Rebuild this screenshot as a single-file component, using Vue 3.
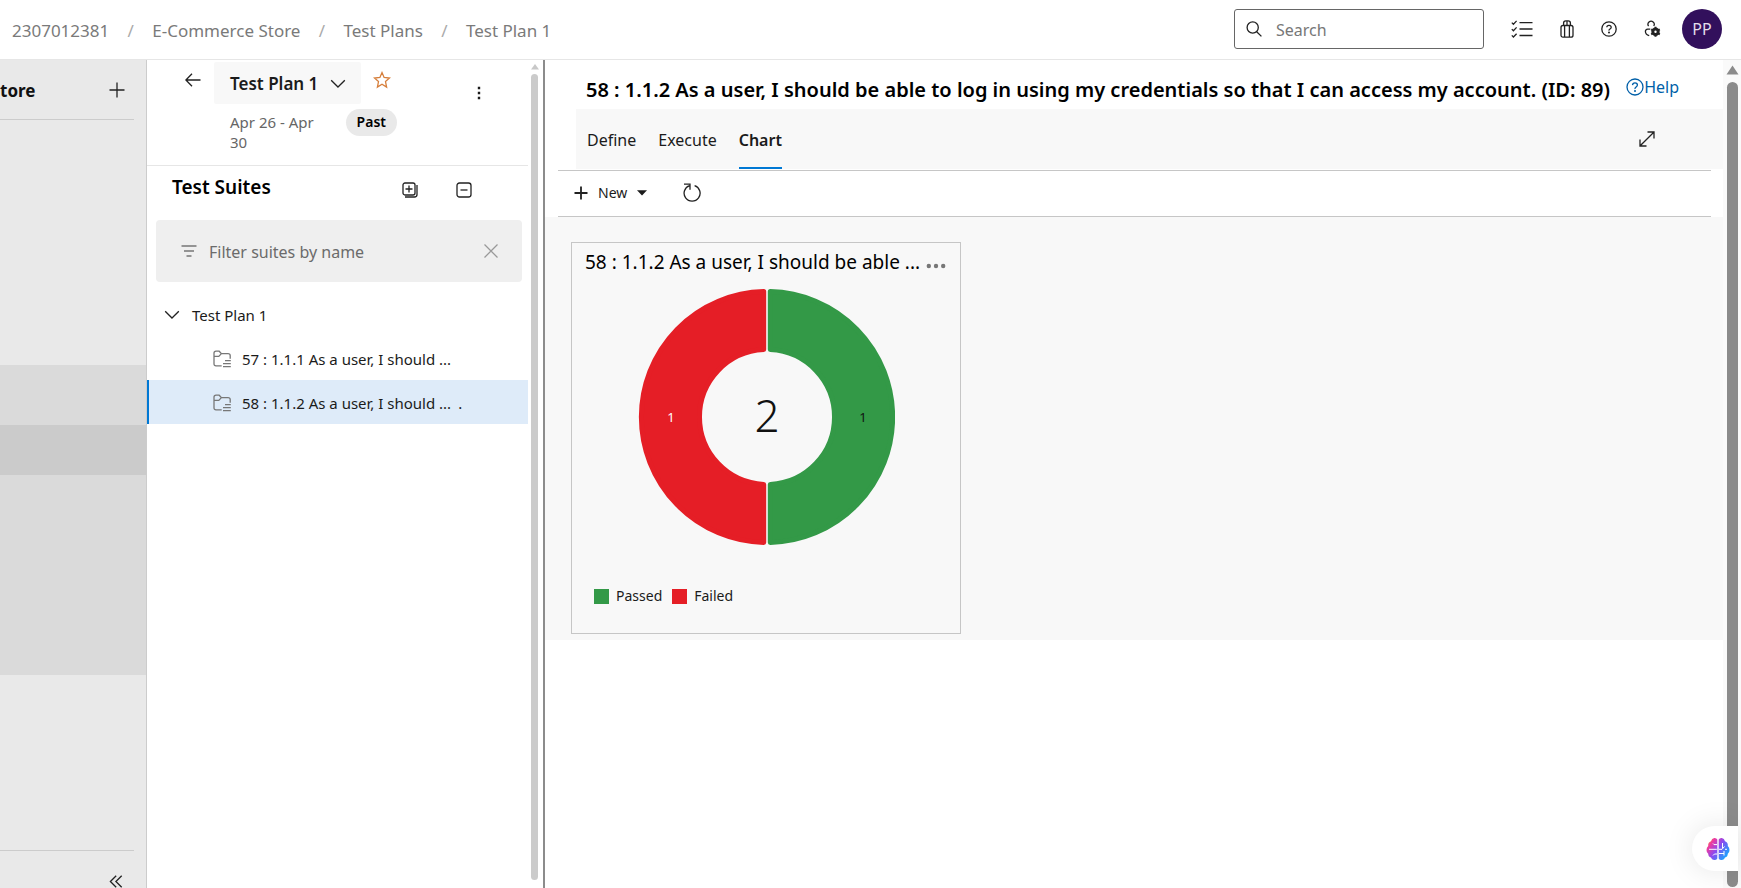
<script setup>
import { ref } from 'vue'

const crumbs = ['2307012381', 'E-Commerce Store', 'Test Plans', 'Test Plan 1']
const suites = [
  { label: '57 : 1.1.1 As a user, I should ...', more: '' },
  { label: '58 : 1.1.2 As a user, I should ...', more: '.' }
]
const selected = ref(1)
const tabs = ['Define', 'Execute', 'Chart']
const activeTab = ref('Chart')
const legend = [
  { name: 'Passed', tone: 'passed' },
  { name: 'Failed', tone: 'failed' }
]
</script>

<template>
  <div class="page">
    <header class="topbar">
      <nav class="crumbs" aria-label="Breadcrumb">
        <template v-for="(c, i) in crumbs" :key="c">
          <span v-if="i" class="sep">/</span>
          <a href="#">{{ c }}</a>
        </template>
      </nav>
      <label class="search">
        <svg width="16" height="16" viewBox="0 0 16 16"><circle cx="6.7" cy="6.5" r="5.6" /><path d="M10.7 10.7 15.4 15.4" /></svg>
        <input type="search" placeholder="Search" aria-label="Search" />
      </label>
      <div class="tools">
        <button aria-label="Work items">
          <svg width="22" height="18" viewBox="0 0 22 18"><path d="M.8 2.6 2.4 4.2 5.6.9M.8 9.1l1.6 1.6 3.2-3.3M.8 15.4 2.4 17l3.2-3.3M8.5 2.6H21.5M8.5 9H21.5M8.5 15.5H21.5" /></svg>
        </button>
        <button aria-label="Marketplace">
          <svg width="14" height="18" viewBox="0 0 14 18"><rect x="1" y="5.5" width="12" height="11.7" rx="2" /><path d="M3.6 5.5V3Q3.6.8 5.8.8H8.2Q10.4.8 10.4 3V5.5M7 1V5.5M4.6 5.5v11.5M9.4 5.5v11.5" /></svg>
        </button>
        <button aria-label="Help">
          <svg width="16" height="16" viewBox="0 0 16 16"><circle cx="8" cy="8" r="7.2" /><path d="M5.8 6.3Q5.9 4.3 8 4.3T10.2 6.2Q10.2 7.2 9 8T8 9.7" /><circle class="dot" cx="8" cy="11.6" r="1" /></svg>
        </button>
        <button aria-label="User settings">
          <svg width="18" height="18" viewBox="0 0 18 18"><path d="M4.6 6.1A3.1 3.1 0 1 1 9.7 6M5.2 15.6Q1.5 14.5 1.4 11.5 1.4 9.3 3.7 9.1H6.3" /><circle class="gear" cx="11.5" cy="11.8" r="2.7" /><path class="teeth" d="M11.5 6.8V8.6M11.5 15V16.8M7.2 9.3 8.8 10.2M14.2 13.4 15.8 14.3M7.2 14.3 8.8 13.4M14.2 10.2 15.8 9.3" /></svg>
        </button>
      </div>
      <button class="avatar" aria-label="Account">PP</button>
    </header>

    <div class="body">
      <aside class="rail">
        <div class="rail-head">
          <strong>tore</strong>
          <button aria-label="Add"><svg width="16" height="16" viewBox="0 0 16 16"><path d="M8 .5V15.5M.5 8H15.5" /></svg></button>
        </div>
        <div class="rail-nav"><div class="group"><div class="current"></div></div></div>
        <div class="rail-foot">
          <button aria-label="Collapse"><svg width="14" height="13" viewBox="0 0 14 13"><path d="M7.2.7 1.4 6.5l5.8 5.8M12.7.7 6.9 6.5l5.8 5.8" /></svg></button>
        </div>
      </aside>

      <section class="plan">
        <div class="plan-main">
          <div class="plan-head">
            <button class="back" aria-label="Back"><svg width="16" height="14" viewBox="0 0 16 14"><path d="M15.5 7H1M7 .8.9 7 7 13.2" /></svg></button>
            <div class="plan-info">
              <button class="plan-name">Test Plan 1
                <svg width="16" height="10" viewBox="0 0 16 10"><path d="M1.2 1.2 8 8 14.8 1.2" /></svg>
              </button>
              <div class="dates"><span class="range">Apr 26 - Apr 30</span><span class="pill">Past</span></div>
            </div>
            <button class="star" aria-label="Favorite"><svg width="18" height="18" viewBox="0 0 18 18"><path d="M9 1.6 11.1 6.5 16.5 7 12.5 10.6 13.6 16.1 9 13.3 4.4 16.1 5.5 10.6 1.5 7 6.9 6.5Z" /></svg></button>
            <button class="more" aria-label="More"><svg width="4" height="14" viewBox="0 0 4 14"><path class="fill" d="M.8.8h2.4v2.4H.8zM.8 5.8h2.4v2.4H.8zM.8 10.8h2.4v2.4H.8z" /></svg></button>
          </div>
          <div class="suite-head">
            <h2>Test Suites</h2>
            <button aria-label="Expand all"><svg width="16" height="16" viewBox="0 0 16 16"><rect x="1" y="1" width="12" height="12" rx="2" /><path d="M7 3.5v7M3.5 7h7M15 3v9.5Q15 15 12.5 15H3" /></svg></button>
            <button aria-label="Collapse all"><svg width="16" height="16" viewBox="0 0 16 16"><rect x="1" y="1" width="14" height="14" rx="2.5" /><path d="M4.5 8h7" /></svg></button>
          </div>
          <div class="filter">
            <svg width="16" height="12" viewBox="0 0 16 12"><path d="M.5 1h15M3 6h10M5.5 11h5" /></svg>
            <input type="text" placeholder="Filter suites by name" aria-label="Filter suites by name" />
            <button aria-label="Clear filter"><svg width="14" height="14" viewBox="0 0 14 14"><path d="M.5.5l13 13M13.5.5l-13 13" /></svg></button>
          </div>
          <div class="tree">
            <button class="node root"><svg width="16" height="10" viewBox="0 0 16 10"><path d="M1.2 1.2 8 8 14.8 1.2" /></svg>Test Plan 1</button>
            <button v-for="(s, i) in suites" :key="s.label" class="node leaf" :class="{ on: selected === i }" @click="selected = i">
              <svg width="18" height="18" viewBox="0 0 18 18"><path d="M8.7 15.8H3Q1 15.8 1 13.8V3.2Q1 1.2 3 1.2H6.2L8.4 3.6H15Q17.2 3.6 17.2 5.6V8.8M1 6.4H5.8L8.4 3.6M12 10.7h5.8M10 13.7h7.8M10 16.7h7.8" /></svg>
              <span>{{ s.label }}</span><span>{{ s.more }}</span>
            </button>
          </div>
        </div>
        <div class="scroll light">
          <svg width="8" height="6" viewBox="0 0 8 6"><path d="M4 0 8 5.5H0z" /></svg>
          <div class="thumb"></div>
        </div>
      </section>

      <main class="content">
        <div class="pane">
          <div class="title-row">
            <h1>58 : 1.1.2 As a user, I should be able to log in using my credentials so that I can access my account. (ID: 89)</h1>
            <a class="help" href="#"><svg width="18" height="18" viewBox="0 0 18 18"><circle cx="9" cy="9" r="8" /><path d="M6.5 7.1Q6.6 4.8 9 4.8T11.4 7Q11.4 8 10.1 9T9 11" /><circle class="dot" cx="9" cy="13.1" r="1" /></svg>Help</a>
          </div>
          <div class="tabs">
            <button v-for="t in tabs" :key="t" :class="{ active: t === activeTab }" @click="activeTab = t">{{ t }}</button>
            <button class="expand" aria-label="Full screen"><svg width="16" height="16" viewBox="0 0 16 16"><path d="M1 8.5V15H7.5M8.5 1H15V7.5M1.2 14.8 14.8 1.2" /></svg></button>
          </div>
          <div class="actions">
            <button class="new"><svg width="14" height="14" viewBox="0 0 14 14"><path d="M7 0.5V13.5M.5 7h13" /></svg>New<svg class="caret" width="10" height="6" viewBox="0 0 10 6"><path class="fill" d="M0 .3h10L5 5.6z" /></svg></button>
            <button aria-label="Refresh"><svg width="18" height="19" viewBox="0 0 18 19"><path d="M1 1.2H7V6.8M6.6 2.6A8 8 0 1 0 11.6 2.6" /></svg></button>
          </div>
          <div class="board">
            <article class="card">
              <div class="card-head">
                <h3>58 : 1.1.2 As a user, I should be able ...</h3>
                <button aria-label="Chart actions"><svg width="20" height="6" viewBox="0 0 20 6"><circle cx="2.8" cy="3" r="2.2" /><circle cx="10" cy="3" r="2.2" /><circle cx="17.2" cy="3" r="2.2" /></svg></button>
              </div>
              <svg class="donut" width="258" height="258" viewBox="-130 -129 258 258" role="img" aria-label="2 results: 1 passed, 1 failed">
                <path class="passed" d="M3.3-125.46A125.5 125.5 0 0 1 3.3 125.46V67.42A67.5 67.5 0 0 0 3.3-67.42Z" />
                <path class="failed" d="M-3.3-125.46A125.5 125.5 0 0 0-3.3 125.46V67.42A67.5 67.5 0 0 1-3.3-67.42Z" />
                <text class="lbl white" x="-96" y="5">1</text>
                <text class="lbl" x="96" y="5">1</text>
                <text class="total" x="0" y="15">2</text>
              </svg>
              <ul class="legend">
                <li v-for="l in legend" :key="l.name"><i :class="l.tone"></i>{{ l.name }}</li>
              </ul>
            </article>
          </div>
        </div>
        <div class="scroll dark">
          <svg width="13" height="10" viewBox="0 0 13 10"><path d="M6.5.5 12.5 9.5H.5z" /></svg>
          <div class="thumb"></div>
        </div>
      </main>
    </div>

    <button class="assistant" aria-label="Assistant">
      <svg width="24" height="24" viewBox="0 0 24 24">
        <defs><linearGradient id="brain" x1="0" y1="0" x2="1" y2=".7"><stop offset="0" stop-color="#ffb300" /><stop offset=".25" stop-color="#ee3aa0" /><stop offset=".55" stop-color="#8a4bf0" /><stop offset="1" stop-color="#16a8ff" /></linearGradient></defs>
        <path fill="url(#brain)" d="M11.3 2.5V21.5Q10.3 23.3 8 23 5.6 22.8 5 20.5 2.2 19.8 2.2 16.8 .4 15.5 .5 13 .5 10.5 2.2 9 1.8 5.5 5 4.3 5.7 1.5 8.2 1 10.5 .8 11.3 2.5ZM12.7 2.5V21.5Q13.7 23.3 16 23 18.4 22.8 19 20.5 21.8 19.8 21.8 16.8 23.6 15.5 23.5 13 23.5 10.5 21.8 9 22.2 5.5 19 4.3 18.3 1.5 15.8 1 13.5 .8 12.7 2.5Z" />
        <path class="veins" d="M3 12.3H10.8M11 7.6H8L7 6.5M11 17H8.5L7 18.5M13 12.3H16L18.5 9.5M16.5 6V11M13 16.5H18M18 14V18.5M21 12.3H19" />
      </svg>
    </button>
  </div>
</template>

<style>
html, body { background: #fff; }
</style>

<style scoped>
* { box-sizing: border-box; }
.page { display: flex; flex-direction: column; height: 100vh; overflow: hidden; font: 14px/20px "Noto Sans", "Open Sans", sans-serif; color: #1b1b1b; position: relative; }
button { border: 0; background: none; padding: 0; margin: 0; font: inherit; color: inherit; display: flex; align-items: center; cursor: pointer; }
svg { display: block; flex: none; fill: none; stroke: #222; stroke-width: 1.3; }
svg .fill, svg .dot { fill: currentColor; stroke: none; }
a { text-decoration: none; color: inherit; }
h1, h2, h3, ul { margin: 0; padding: 0; }
input { border: 0; outline: 0; background: none; padding: 2px 0 0; font: inherit; min-width: 0; flex: 1; }

.topbar { flex: none; display: flex; align-items: center; height: 60px; padding: 0 19px 1px 12px; border-bottom: 1px solid #e6e6e6; }
.crumbs { flex: 1; display: flex; align-items: center; padding-top: 3px; font-size: 17px; color: #7a7a7a; }
.sep { width: 43px; text-align: center; color: #aaa; }
.search { display: flex; align-items: center; gap: 14px; width: 250px; height: 40px; padding: 0 11px; border: 1px solid #666; border-radius: 3px; font-size: 16px; }
.search input::placeholder { color: #777; opacity: 1; }
.tools { display: flex; align-items: center; gap: 27px; padding: 0 20px 0 27px; }
.gear { stroke-width: 3; }
.teeth { stroke-width: 2; }
.avatar { justify-content: center; width: 40px; height: 40px; border-radius: 50%; background: #32105c; color: #e4deea; font-size: 16px; }

.body { flex: 1; display: flex; min-height: 0; }
.rail { flex: none; width: 147px; display: flex; flex-direction: column; background: #e9e9e9; border-right: 1px solid #ccc; }
.rail-head { display: flex; align-items: center; justify-content: space-between; height: 60px; margin-right: 12px; padding-right: 9px; border-bottom: 1px solid #ccc; }
.rail-head strong { padding-top: 2px; font-size: 17px; font-weight: 700; color: #111; }
.rail-nav { flex: 1; padding-top: 245px; }
.group { height: 310px; padding-top: 60px; background: #dadada; }
.current { height: 50px; background: #cbcbcb; }
.rail-foot { display: flex; justify-content: flex-end; height: 38px; margin-right: 12px; padding: 24px 11px 0 0; border-top: 1px solid #ccc; }
.rail-foot button { align-items: flex-start; }

.plan { flex: none; width: 398px; display: flex; border-right: 2px solid #8c8c8c; }
.plan-main { flex: 1; display: flex; flex-direction: column; }
.plan-head { display: flex; align-items: flex-start; height: 106px; padding: 2px 47px 0 38px; border-bottom: 1px solid #e6e6e6; }
.back { height: 36px; margin-right: 13px; }
.plan-info { width: 147px; }
.plan-name { width: 147px; height: 42px; justify-content: space-between; padding: 1px 15px 0 16px; background: #f8f8f8; border-radius: 2px; font-size: 17px; font-weight: 600; }
.dates { display: flex; align-items: flex-start; gap: 22px; margin: 5px -36px 0 16px; }
.range { width: 94px; padding-top: 3px; font-size: 15px; color: #666; }
.pill { padding: 3px 11px 4px; border-radius: 14px; background: #e9e9e9; color: #000; font-weight: 600; }
.star { height: 36px; margin-left: 12px; }
.star svg { stroke: #d67f3c; }
.more { height: 62px; margin-left: auto; }
.suite-head { display: flex; align-items: flex-start; padding: 8px 56px 0 25px; height: 54px; }
h2 { flex: 1; font-size: 19px; line-height: 26px; font-weight: 600; color: #000; }
.suite-head button { height: 28px; padding-top: 4px; margin-left: 38px; }
.filter { display: flex; align-items: center; gap: 12px; height: 62px; margin: 0 6px 0 9px; padding: 0 24px 0 25px; background: #efefef; border-radius: 4px; font-size: 16px; }
.filter svg { stroke: #777; }
.filter button svg { stroke: #999; }
.filter input::placeholder { color: #6b6b6b; opacity: 1; }
.tree { padding-top: 10px; }
.node { width: 100%; height: 44px; gap: 12px; padding-top: 2px; font-size: 15px; }
.root { padding-left: 17px; }
.leaf { padding-left: 64px; border-left: 2px solid transparent; gap: 7px; }
.leaf svg { margin-right: 4px; stroke: #777; }
.leaf.on { background: #deebf9; border-color: #0078d4; }

.scroll { flex: none; display: flex; flex-direction: column; align-items: center; }
.scroll svg { stroke: none; }
.scroll .thumb { flex: 1; border-radius: 6px; }
.light { width: 15px; padding: 4px 2px 8px 0; gap: 4px; }
.light svg { fill: #c8c8c8; }
.light .thumb { width: 7px; background: #cbcbcb; }
.dark { width: 18px; padding: 5px 0 1px; gap: 7px; background: #fafafa; }
.dark svg { fill: #8b8b8b; }
.dark .thumb { width: 11px; background: #8b8b8b; }

.content { flex: 1; display: flex; min-width: 0; }
.pane { flex: 1; min-width: 0; }
.title-row { display: flex; align-items: flex-start; justify-content: space-between; height: 49px; padding: 14px 44px 0 41px; }
h1 { font-size: 20px; line-height: 32px; font-weight: 600; color: #000; white-space: nowrap; }
.help { display: flex; align-items: center; line-height: 26px; font-size: 16px; color: #005fa8; }
.help svg { stroke: #005fa8; }
.tabs { display: flex; gap: 22px; height: 60px; margin-left: 31px; padding: 0 68px 0 11px; background: #f8f8f8; font-size: 16px; }
.tabs button { padding-top: 4px; border-bottom: 2px solid transparent; }
.tabs .active { font-weight: 600; border-color: #0078d4; }
.tabs .expand { margin-left: auto; padding-top: 2px; }
.actions { display: flex; align-items: center; gap: 36px; height: 47px; margin: 1px 12px 0 13px; padding: 0 16px 2px; border-top: 1px solid #c6c6c6; border-bottom: 1px solid #c6c6c6; }
.new { gap: 10px; }
.new svg:first-child { stroke-width: 1.8; }
.board { padding: 25px 26px 6px; background: #f8f8f8; }
.card { display: flex; flex-direction: column; align-items: center; width: 390px; height: 392px; border: 1px solid #c6c6c6; }
.card-head { display: flex; align-items: center; justify-content: space-between; align-self: stretch; height: 45px; padding: 0 14px 7px 13px; }
h3 { font-size: 19px; font-weight: 400; color: #000; white-space: nowrap; }
.card-head button { padding-top: 8px; }
.card-head svg { fill: #777; stroke: none; }
.donut .passed { fill: #339947; stroke: #339947; stroke-width: 5; stroke-linejoin: round; }
.donut .failed { fill: #e51e26; stroke: #e51e26; stroke-width: 5; stroke-linejoin: round; }
.donut text { stroke: none; fill: #111; text-anchor: middle; }
.donut .lbl { font-size: 13px; }
.donut .white { fill: #fff; }
.donut .total { font-size: 44px; font-weight: 300; }
.legend { display: flex; align-self: flex-start; gap: 10px; list-style: none; margin: 40px 0 0 22px; }
.legend li { display: flex; align-items: center; gap: 7px; }
.legend i { width: 15px; height: 15px; }
.legend .passed { background: #339947; }
.legend .failed { background: #e51e26; }

.assistant { position: absolute; right: 3px; bottom: 17px; width: 46px; height: 45px; padding-left: 14px; border-radius: 23px 0 0 23px; background: #fff; box-shadow: 0 0 30px rgba(0, 0, 0, 0.1); }
.assistant svg { stroke: none; }
.assistant .veins { stroke: #fff; stroke-width: 1; }
</style>
